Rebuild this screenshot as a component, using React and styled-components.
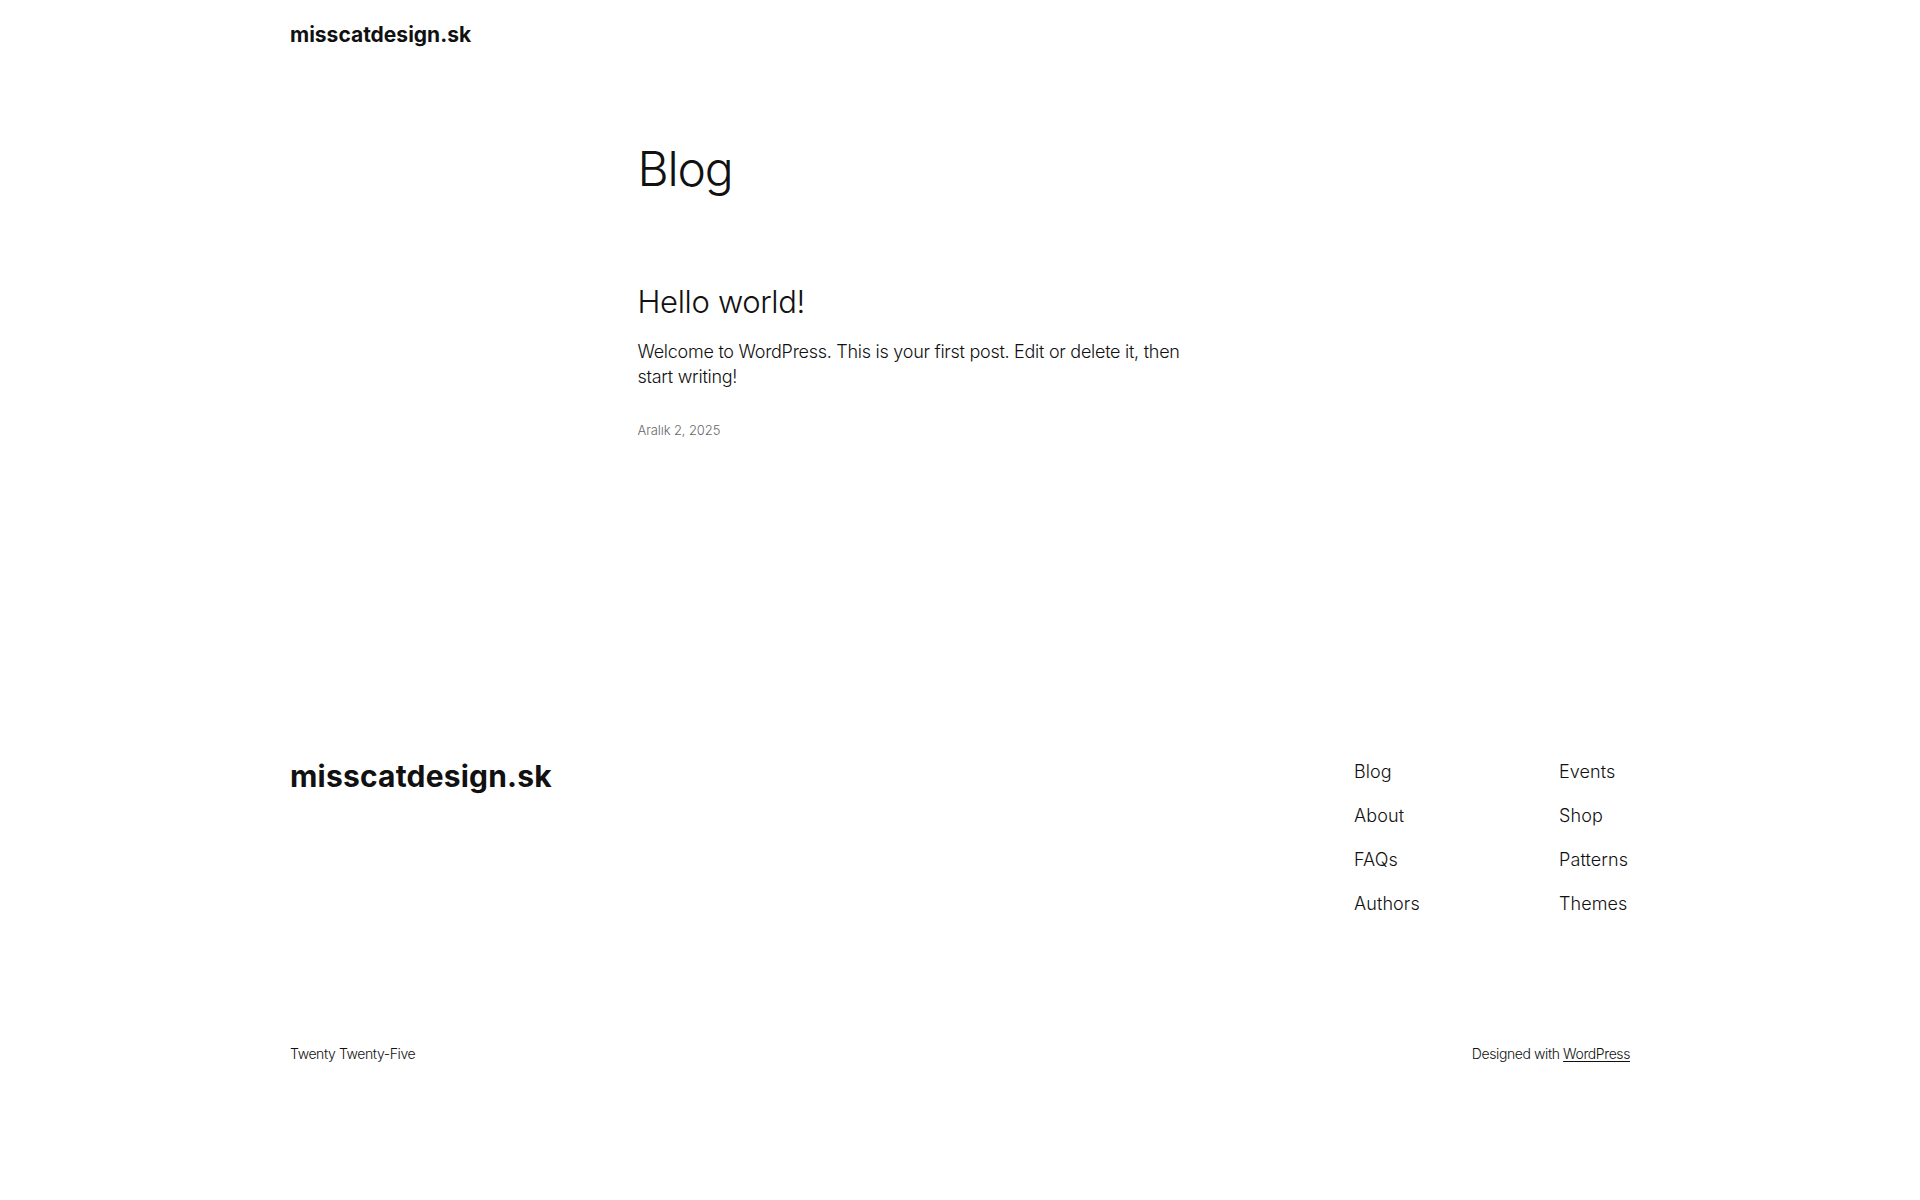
import styled, { createGlobalStyle } from 'styled-components'

const GlobalStyle = createGlobalStyle`
  html, body {
    margin: 0;
    padding: 0;
    background: #ffffff;
  }
  body {
    font-family: Inter, "Noto Sans", "Liberation Sans", sans-serif;
    font-weight: 300;
    color: #111111;
    -webkit-font-smoothing: antialiased;
  }
  a {
    color: inherit;
    text-decoration: none;
  }
`

const Page = styled.div`
  min-height: 1200px;
  display: flex;
  flex-direction: column;
`

const Wide = styled.div`
  width: 1340px;
  margin: 0 auto;
`

const Header = styled.header`
  padding: 21px 0 0;
`

const SiteTitle = styled.a`
  display: inline-block;
  font-size: ${(p) => (p.$big ? '30px' : '21px')};
  line-height: ${(p) => (p.$big ? '35px' : '28px')};
  font-weight: 650;
  letter-spacing: ${(p) => (p.$big ? '0.2px' : '0px')};
`

const Main = styled.main`
  width: 645px;
  margin: 0 auto;
  padding-top: 89px;
`

const PageTitle = styled.h1`
  margin: 0;
  font-size: 48px;
  line-height: 61px;
  font-weight: 300;
  letter-spacing: -1.2px;
`

const Post = styled.article`
  margin-top: 85px;
`

const PostTitle = styled.h2`
  margin: 0;
  font-size: 31px;
  line-height: 36px;
  font-weight: 300;
  letter-spacing: -0.35px;
`

const Excerpt = styled.p`
  margin: 19px 0 0;
  font-size: 18px;
  line-height: 25px;
  font-weight: 300;
  letter-spacing: -0.27px;
`

const PostDate = styled.time`
  display: block;
  margin-top: 31px;
  font-size: 13px;
  line-height: 20px;
  font-weight: 300;
  color: #686868;
  letter-spacing: -0.1px;
`

const Footer = styled.footer`
  margin-top: 319px;
`

const FooterTop = styled.div`
  display: flex;
  justify-content: space-between;
  align-items: flex-start;
`

const NavGrid = styled.nav`
  display: grid;
  grid-template-columns: 205px 71px;
`

const NavColumn = styled.ul`
  list-style: none;
  margin: 0;
  padding: 0;
  display: flex;
  flex-direction: column;
  gap: 19px;
`

const NavItem = styled.li`
  font-size: 18px;
  line-height: 25px;
  font-weight: 300;
  letter-spacing: 0.1px;
  white-space: nowrap;
`

const FooterBottom = styled.div`
  display: flex;
  justify-content: space-between;
  margin-top: 128px;
  font-size: 14px;
  line-height: 20px;
  font-weight: 300;
  letter-spacing: -0.4px;
`

const Credit = styled.span``

const UnderLink = styled.a`
  text-decoration: underline;
  text-underline-offset: 2px;
`

const leftLinks = ['Blog', 'About', 'FAQs', 'Authors']
const rightLinks = ['Events', 'Shop', 'Patterns', 'Themes']

export default function App() {
  return (
    <Page>
      <GlobalStyle />
      <Header>
        <Wide>
          <SiteTitle href="#">misscatdesign.sk</SiteTitle>
        </Wide>
      </Header>

      <Main>
        <PageTitle>Blog</PageTitle>
        <Post>
          <PostTitle>
            <a href="#">Hello world!</a>
          </PostTitle>
          <Excerpt>
            Welcome to WordPress. This is your first post. Edit or delete it, then
            <br />
            start writing!
          </Excerpt>
          <PostDate>Aralık 2, 2025</PostDate>
        </Post>
      </Main>

      <Footer>
        <Wide>
          <FooterTop>
            <SiteTitle $big href="#">misscatdesign.sk</SiteTitle>
            <NavGrid>
              <NavColumn>
                {leftLinks.map((l) => (
                  <NavItem key={l}><a href="#">{l}</a></NavItem>
                ))}
              </NavColumn>
              <NavColumn>
                {rightLinks.map((l) => (
                  <NavItem key={l}><a href="#">{l}</a></NavItem>
                ))}
              </NavColumn>
            </NavGrid>
          </FooterTop>
          <FooterBottom>
            <Credit>Twenty Twenty-Five</Credit>
            <Credit>
              Designed with <UnderLink href="#">WordPress</UnderLink>
            </Credit>
          </FooterBottom>
        </Wide>
      </Footer>
    </Page>
  )
}
